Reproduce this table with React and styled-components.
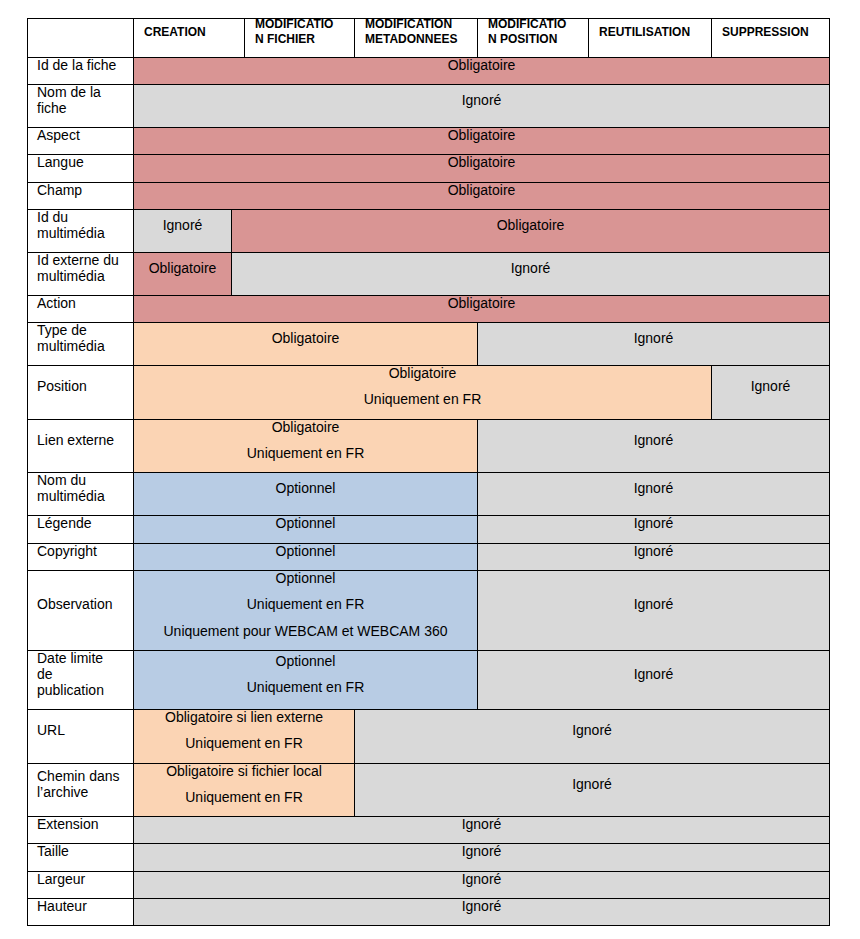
import React from "react";
import styled, { createGlobalStyle } from "styled-components";

const Global = createGlobalStyle`
  html, body { margin: 0; padding: 0; background: #fff; }
  body { font-family: "Liberation Sans", Arial, sans-serif; color: #000; }
`;

const COLORS = {
  red: "#d99594",
  grey: "#d9d9d9",
  orange: "#fbd4b4",
  blue: "#b8cce4",
};

const Page = styled.div`
  padding: 18px 0 0 27px;
`;

const Table = styled.div`
  width: 803px;
  box-sizing: border-box;
  border-top: 1px solid #000;
  border-left: 1px solid #000;
  display: flex;
  flex-direction: column;
`;

const Row = styled.div`
  display: flex;
  align-items: stretch;
`;

const HeadCell = styled.div`
  box-sizing: border-box;
  width: ${(p) => p.$w}px;
  flex: none;
  height: 39px;
  border-right: 1px solid #000;
  border-bottom: 1px solid #000;
  padding: 0 14px 12px 10px;
  display: flex;
  align-items: center;
  font-size: 12px;
  font-weight: 700;
  line-height: 15px;
  overflow-wrap: anywhere;
`;

const LabelCell = styled.div`
  box-sizing: border-box;
  width: 106px;
  flex: none;
  border-right: 1px solid #000;
  border-bottom: 1px solid #000;
  padding: 0 8px 10.4px 9px;
  display: flex;
  flex-direction: column;
  justify-content: center;
  font-size: 14px;
  line-height: 15.8px;
`;

const ValueCell = styled.div`
  box-sizing: border-box;
  width: ${(p) => p.$w}px;
  flex: none;
  background: ${(p) => COLORS[p.$tone]};
  border-right: 1px solid #000;
  border-bottom: 1px solid #000;
  padding: 0 4px 10.4px;
  display: flex;
  flex-direction: column;
  justify-content: center;
  align-items: center;
  gap: 10.75px;
  font-size: 14px;
  line-height: 15.8px;
  text-align: center;
`;

const Line = styled.span`
  display: block;
  white-space: nowrap;
`;

const HEAD = [
  { w: 111, t: "CREATION" },
  { w: 110, t: "MODIFICATION FICHIER" },
  { w: 123, t: "MODIFICATION METADONNEES" },
  { w: 111, t: "MODIFICATION POSITION" },
  { w: 123, t: "REUTILISATION" },
  { w: 118, t: "SUPPRESSION" },
];

const S = 133;
const E = 829;
const OBL = ["Obligatoire"];
const IGN = ["Ignoré"];
const OPT = ["Optionnel"];
const FR = "Uniquement en FR";

const full = (tone, t) => [{ a: S, b: E, tone, t }];

const ROWS = [
  { l: ["Id de la fiche"], c: full("red", OBL) },
  { l: ["Nom de la", "fiche"], c: full("grey", IGN) },
  { l: ["Aspect"], c: full("red", OBL) },
  { l: ["Langue"], c: full("red", OBL) },
  { l: ["Champ"], c: full("red", OBL) },
  {
    l: ["Id du", "multimédia"],
    c: [
      { a: S, b: 231, tone: "grey", t: IGN },
      { a: 231, b: E, tone: "red", t: OBL },
    ],
  },
  {
    l: ["Id externe du", "multimédia"],
    c: [
      { a: S, b: 231, tone: "red", t: OBL },
      { a: 231, b: E, tone: "grey", t: IGN },
    ],
  },
  { l: ["Action"], c: full("red", OBL) },
  {
    l: ["Type de", "multimédia"],
    c: [
      { a: S, b: 477, tone: "orange", t: OBL },
      { a: 477, b: E, tone: "grey", t: IGN },
    ],
  },
  {
    l: ["Position"],
    c: [
      { a: S, b: 711, tone: "orange", t: ["Obligatoire", FR] },
      { a: 711, b: E, tone: "grey", t: IGN },
    ],
  },
  {
    l: ["Lien externe"],
    c: [
      { a: S, b: 477, tone: "orange", t: ["Obligatoire", FR] },
      { a: 477, b: E, tone: "grey", t: IGN },
    ],
  },
  {
    l: ["Nom du", "multimédia"],
    c: [
      { a: S, b: 477, tone: "blue", t: OPT },
      { a: 477, b: E, tone: "grey", t: IGN },
    ],
  },
  {
    l: ["Légende"],
    c: [
      { a: S, b: 477, tone: "blue", t: OPT },
      { a: 477, b: E, tone: "grey", t: IGN },
    ],
  },
  {
    l: ["Copyright"],
    c: [
      { a: S, b: 477, tone: "blue", t: OPT },
      { a: 477, b: E, tone: "grey", t: IGN },
    ],
  },
  {
    l: ["Observation"],
    c: [
      {
        a: S,
        b: 477,
        tone: "blue",
        t: ["Optionnel", FR, "Uniquement pour WEBCAM et WEBCAM 360"],
      },
      { a: 477, b: E, tone: "grey", t: IGN },
    ],
  },
  {
    l: ["Date limite", "de", "publication"],
    c: [
      { a: S, b: 477, tone: "blue", t: ["Optionnel", FR] },
      { a: 477, b: E, tone: "grey", t: IGN },
    ],
  },
  {
    l: ["URL"],
    c: [
      { a: S, b: 354, tone: "orange", t: ["Obligatoire si lien externe", FR] },
      { a: 354, b: E, tone: "grey", t: IGN },
    ],
  },
  {
    l: ["Chemin dans", "l’archive"],
    c: [
      { a: S, b: 354, tone: "orange", t: ["Obligatoire si fichier local", FR] },
      { a: 354, b: E, tone: "grey", t: IGN },
    ],
  },
  { l: ["Extension"], c: full("grey", IGN) },
  { l: ["Taille"], c: full("grey", IGN) },
  { l: ["Largeur"], c: full("grey", IGN) },
  { l: ["Hauteur"], c: full("grey", IGN) },
];

export default function App() {
  return (
    <>
      <Global />
      <Page>
        <Table>
          <Row>
            <LabelCell />
            {HEAD.map((h) => (
              <HeadCell key={h.t} $w={h.w}>
                {h.t}
              </HeadCell>
            ))}
          </Row>
          {ROWS.map((r, i) => (
            <Row key={i}>
              <LabelCell>
                {r.l.map((x) => (
                  <Line key={x}>{x}</Line>
                ))}
              </LabelCell>
              {r.c.map((c, j) => (
                <ValueCell key={j} $w={c.b - c.a} $tone={c.tone}>
                  {c.t.map((x) => (
                    <Line key={x}>{x}</Line>
                  ))}
                </ValueCell>
              ))}
            </Row>
          ))}
        </Table>
      </Page>
    </>
  );
}
